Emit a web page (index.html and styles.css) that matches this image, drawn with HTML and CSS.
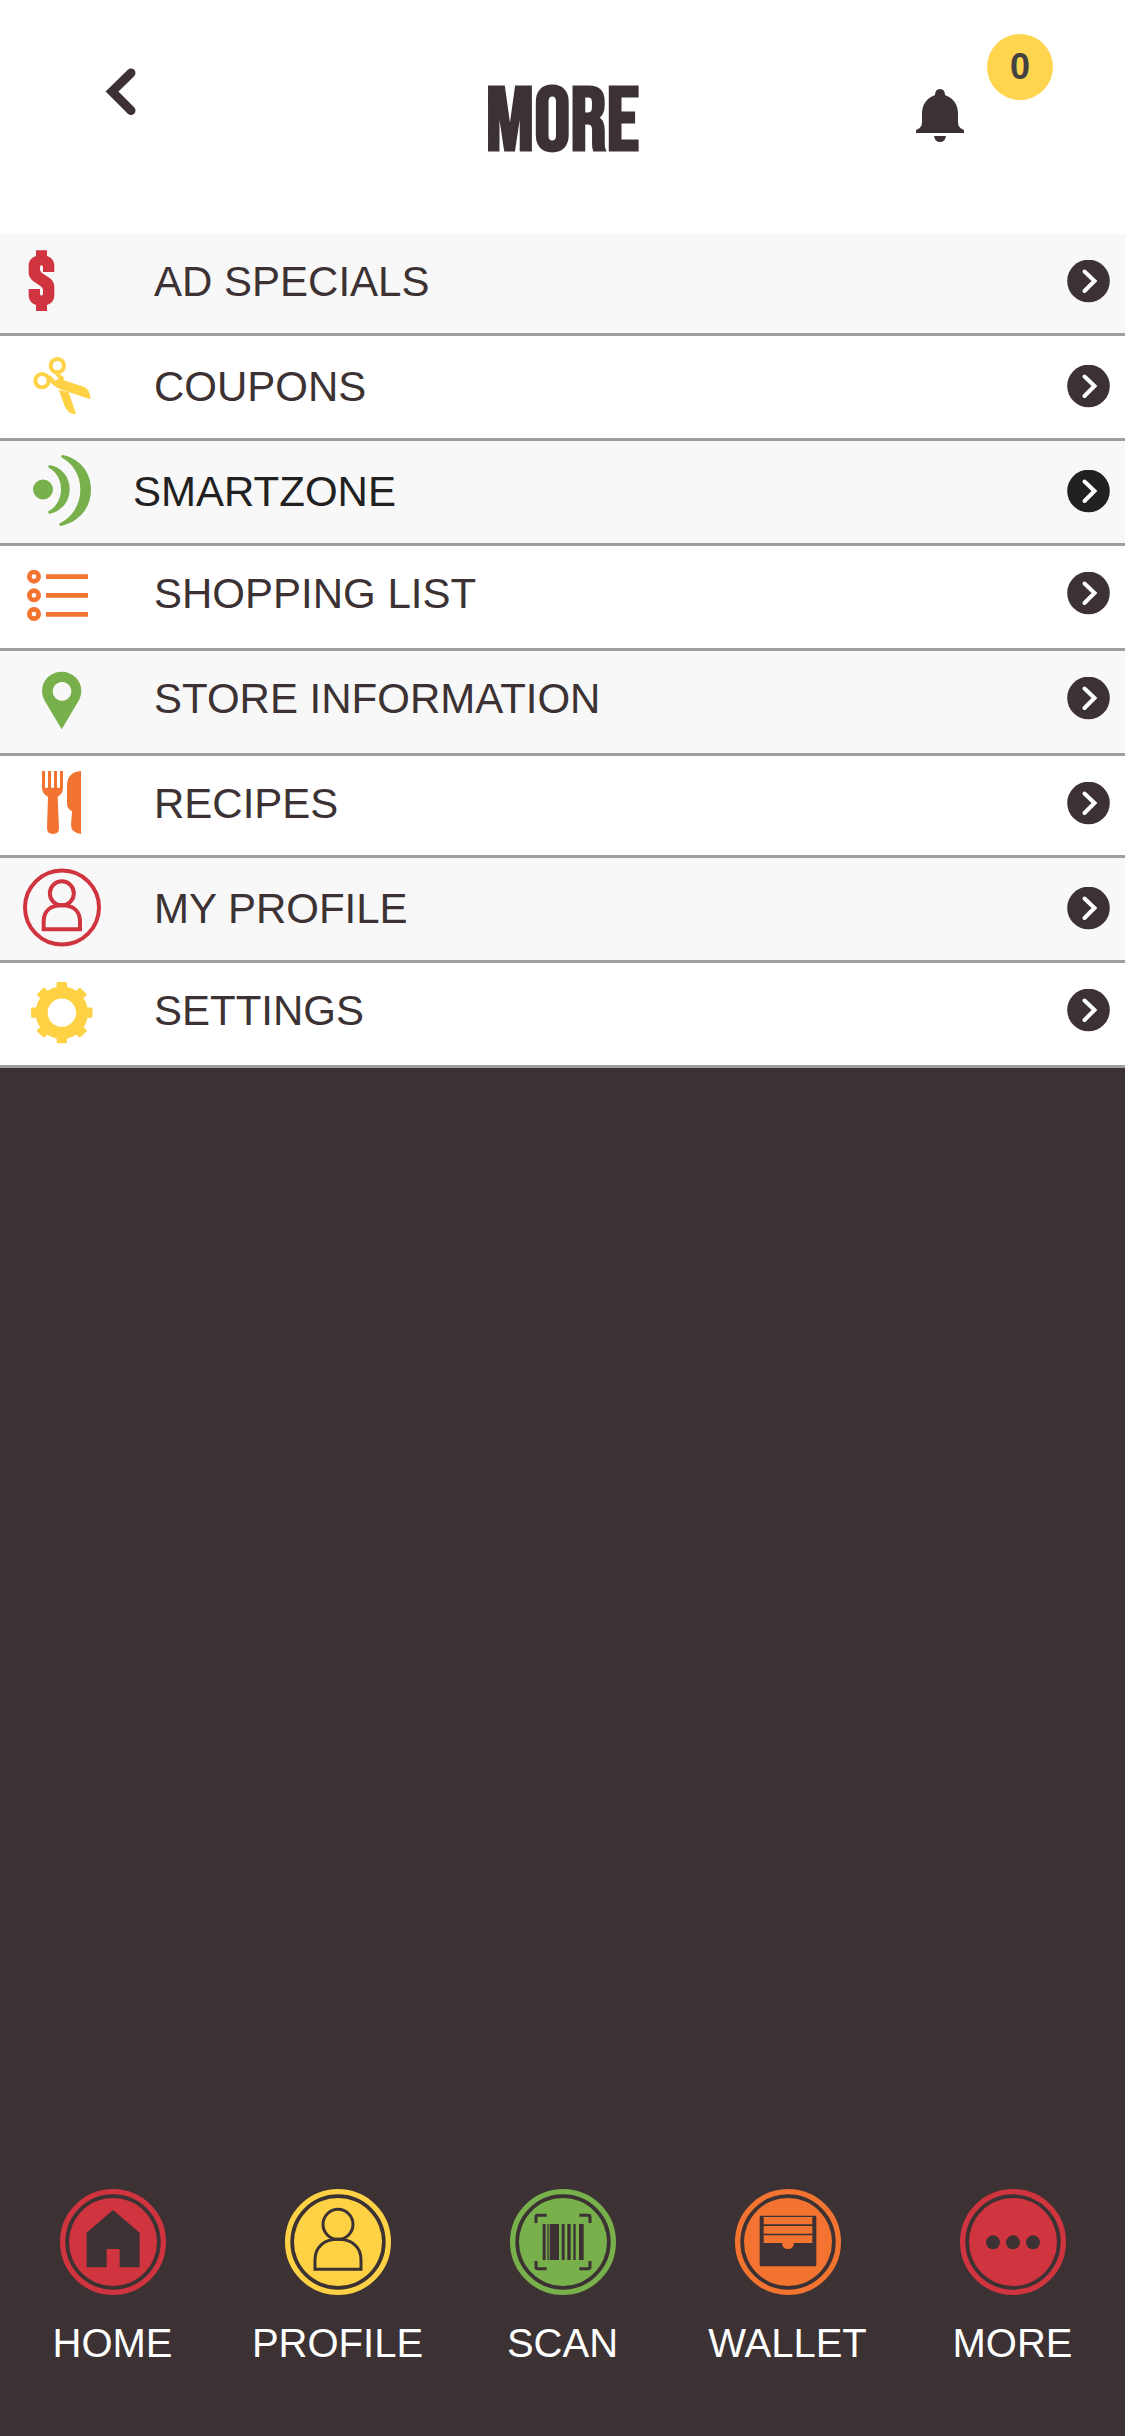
FILE: index.html
```html
<!DOCTYPE html>
<html lang="en">
<head>
    <meta charset="UTF-8">
    <meta name="viewport" content="width=device-width, initial-scale=1.0">
    <title>More</title>
    <link rel="stylesheet" href="styles.css">
</head>
<body>
    <header class="header">
        <button class="back" type="button" aria-label="Back">
            <svg width="31" height="48" viewBox="0 0 31 48"><path d="M26 5L7 23.500L26 42.500" fill="none" stroke="currentColor" stroke-width="9" stroke-linecap="round"/></svg>
        </button>
        <h1 class="title">MORE</h1>
        <button class="bell" type="button" aria-label="Notifications">
            <svg width="50" height="54" viewBox="0 0 50 54" fill="currentColor">
                <path d="M20 6Q20 0 25 0Q30 0 30 6Q43 11 43 25V33Q43 39 49 41V44H1V41Q7 39 7 33V25Q7 11 20 6Z"/>
                <path d="M19 47H31Q30 53 25 53Q20 53 19 47Z"/>
            </svg>
            <span class="badge">0</span>
        </button>
    </header>

    <!-- menu list -->
    <ul class="menu">
        <li>
            <a href="#" class="row short">
                <svg class="icon red" viewBox="0 21 372 270"><path d="M108 61H141V78C155 83 163 92 163 108V126H129V112Q129 106 124 106Q120 106 120 112V119Q121 126 129 131L150 145Q163 155 163 172V195C163 211 155 220 141 225V243H108V225C94 220 86 211 86 195V177H120V190Q120 197 124 197Q129 197 129 190V179Q128 172 120 167L98 152Q86 142 86 127V108C86 92 94 83 108 78Z"/></svg>
                <span class="label">AD SPECIALS</span>
                <svg class="go" viewBox="0 0 43 44"><circle cx="21.500" cy="21" r="21.300"/><path d="M17.500 11.500L27.500 21L17.500 31"/></svg>
            </a>
        </li>
        <li>
            <a href="#" class="row">
                <svg class="icon yellow" viewBox="0 336 372 270">
                    <circle cx="172" cy="407" r="20" fill="none" stroke="currentColor" stroke-width="12"/>
                    <circle cx="126" cy="452" r="20" fill="none" stroke="currentColor" stroke-width="12"/>
                    <path d="M158 424L172 428L190 440L192 451L255 472Q272 484 271 508L186 479Q168 474 150 456L144 438L151 436L166 452L176 446Z"/>
                    <path d="M176 479L206 487L228 551Q205 556 193 526Z"/>
                </svg>
                <span class="label">COUPONS</span>
                <svg class="go" viewBox="0 0 43 44"><circle cx="21.500" cy="21" r="21.300"/><path d="M17.500 11.500L27.500 21L17.500 31"/></svg>
            </a>
        </li>
        <li>
            <a href="#" class="row zone">
                <svg class="icon green" viewBox="0 51 372 270">
                    <circle cx="129" cy="178.500" r="30"/>
                    <path d="M149 105C186 112 209 141 209 178C209 214 187 242 150 251Q143 251 145 244C168 232 183 208 183 178C183 149 170 126 146 113Q143 107 149 105Z"/>
                    <path d="M188 75C240 86 273 127 273 179C273 232 239 275 183 288Q175 286 179 280C216 262 241 224 241 179C241 137 221 103 184 82Q182 76 188 75Z"/>
                </svg>
                <span class="label">SMARTZONE</span>
                <svg class="go" viewBox="0 0 43 44"><circle cx="21.500" cy="21" r="21.300"/><path d="M17.500 11.500L27.500 21L17.500 31"/></svg>
            </a>
        </li>
        <li>
            <a href="#" class="row raised">
                <svg class="icon orange" viewBox="0 357 372 270">
                    <g fill="none" stroke="currentColor" stroke-width="14">
                        <circle cx="102" cy="440" r="14"/>
                        <circle cx="102" cy="496" r="14"/>
                        <circle cx="102" cy="552" r="14"/>
                        <path d="M138 440H264M138 496H264M138 553H264"/>
                    </g>
                </svg>
                <span class="label">SHOPPING LIST</span>
                <svg class="go" viewBox="0 0 43 44"><circle cx="21.500" cy="21" r="21.300"/><path d="M17.500 11.500L27.500 21L17.500 31"/></svg>
            </a>
        </li>
        <li>
            <a href="#" class="row raised">
                <svg class="icon green" viewBox="0 42 372 270"><path fill-rule="evenodd" d="M185 268L138 189Q126 170 126 153A59 58 0 0 1 244 153Q244 170 232 189ZM186 126a28 28 0 1 0 .1 0Z"/></svg>
                <span class="label">STORE INFORMATION</span>
                <svg class="go" viewBox="0 0 43 44"><circle cx="21.500" cy="21" r="21.300"/><path d="M17.500 11.500L27.500 21L17.500 31"/></svg>
            </a>
        </li>
        <li>
            <a href="#" class="row short">
                <svg class="icon orange" viewBox="0 357 372 270">
                    <path d="M126 393H135V443H144V393H153V443H162V393H171V443H180V393H189V444Q188 463 173 470L177 565Q177 582 159 582Q141 582 141 565L144 470Q127 463 126 444Z"/>
                    <path d="M243 393V582Q214 578 213 556L216 514Q201 505 201 492V435Q202 397 243 393Z"/>
                </svg>
                <span class="label">RECIPES</span>
                <svg class="go" viewBox="0 0 43 44"><circle cx="21.500" cy="21" r="21.300"/><path d="M17.500 11.500L27.500 21L17.500 31"/></svg>
            </a>
        </li>
        <li>
            <a href="#" class="row">
                <svg class="icon red" viewBox="0 42 372 270">
                    <g fill="none" stroke="currentColor" stroke-width="12">
                        <circle cx="186" cy="172.500" r="111"/>
                        <circle cx="185.500" cy="130" r="36"/>
                        <path d="M131 238V215C131 183 152 166 185.500 166C219 166 240 183 240 215V238Z"/>
                    </g>
                </svg>
                <span class="label">MY PROFILE</span>
                <svg class="go" viewBox="0 0 43 44"><circle cx="21.500" cy="21" r="21.300"/><path d="M17.500 11.500L27.500 21L17.500 31"/></svg>
            </a>
        </li>
        <li>
            <a href="#" class="row raised">
                <svg class="icon yellow" viewBox="0 348 372 270">
                    <circle cx="185.500" cy="488" r="60.500" fill="none" stroke="currentColor" stroke-width="36"/>
                    <g>
                        <rect x="170" y="396" width="31" height="24" rx="4"/>
                        <rect x="170" y="396" width="31" height="24" rx="4" transform="rotate(45 185.500 488)"/>
                        <rect x="170" y="396" width="31" height="24" rx="4" transform="rotate(90 185.500 488)"/>
                        <rect x="170" y="396" width="31" height="24" rx="4" transform="rotate(135 185.500 488)"/>
                        <rect x="170" y="396" width="31" height="24" rx="4" transform="rotate(180 185.500 488)"/>
                        <rect x="170" y="396" width="31" height="24" rx="4" transform="rotate(225 185.500 488)"/>
                        <rect x="170" y="396" width="31" height="24" rx="4" transform="rotate(270 185.500 488)"/>
                        <rect x="170" y="396" width="31" height="24" rx="4" transform="rotate(315 185.500 488)"/>
                    </g>
                </svg>
                <span class="label">SETTINGS</span>
                <svg class="go" viewBox="0 0 43 44"><circle cx="21.500" cy="21" r="21.300"/><path d="M17.500 11.500L27.500 21L17.500 31"/></svg>
            </a>
        </li>
    </ul>

    <!-- bottom tabs -->
    <nav class="tabs">
        <a href="#" class="tab">
            <svg class="disc red" viewBox="0 0 318 318">
                <circle class="ring" cx="159" cy="159" r="151"/>
                <circle cx="159" cy="159" r="132"/>
                <path class="dark" d="M159 63L239 131V235H179V180H140V235H80V131Z"/>
            </svg>
            <span>HOME</span>
        </a>
        <a href="#" class="tab">
            <svg class="disc yellow" viewBox="0 0 318 318">
                <circle class="ring" cx="159" cy="159" r="151"/>
                <circle cx="159" cy="159" r="132"/>
                <g class="line">
                    <circle cx="159" cy="106" r="45"/>
                    <path d="M90 241V213C90 174 116 151 159 151C202 151 228 174 228 213V241Z"/>
                </g>
            </svg>
            <span>PROFILE</span>
        </a>
        <a href="#" class="tab">
            <svg class="disc green" viewBox="0 0 318 318">
                <circle class="ring" cx="159" cy="159" r="151"/>
                <circle cx="159" cy="159" r="132"/>
                <path class="dark" d="M98 105h9v108h-9zM112 105h4v108h-4zM119 105h28v108h-28zM155 105h9v108h-9zM172 105h10v108h-10zM190 105h7v108h-7zM207 105h14v108h-14z"/>
                <path class="line" d="M110 79H83Q78 79 78 84V102M208 79H235Q240 79 240 84V102M110 239H83Q78 239 78 234V216M208 239H235Q240 239 240 234V216"/>
            </svg>
            <span>SCAN</span>
        </a>
        <a href="#" class="tab">
            <svg class="disc orange" viewBox="0 0 318 318">
                <circle class="ring" cx="159" cy="159" r="151"/>
                <circle cx="159" cy="159" r="132"/>
                <rect class="dark" x="74" y="80" width="170" height="152" rx="4"/>
                <path d="M86 84H232V106H86ZM86 111H232V134H86ZM86 139H232V162H177Q176 180 159 180Q142 180 141 162H86Z"/>
            </svg>
            <span>WALLET</span>
        </a>
        <a href="#" class="tab">
            <svg class="disc red" viewBox="0 0 318 318">
                <circle class="ring" cx="159" cy="159" r="151"/>
                <circle cx="159" cy="159" r="132"/>
                <g class="dark">
                    <circle cx="99" cy="160" r="21"/>
                    <circle cx="159" cy="160" r="21"/>
                    <circle cx="219" cy="160" r="21"/>
                </g>
            </svg>
            <span>MORE</span>
        </a>
    </nav>
</body>
</html>
```
FILE: styles.css
```css
*{
    box-sizing: border-box;
}
body{
    margin: 0;
    min-height: 100vh;
    display: flex;
    flex-direction: column;
    background-color: #3c3233;
    color: #3c3233;
    font-family: "Liberation Sans", Arial, sans-serif;
    font-size: 42px;
    line-height: 48px;
}
a{
    color: inherit;
    text-decoration: none;
}
button{
    border: 0;
    padding: 0;
    background: none;
    color: inherit;
    font: inherit;
}
svg{
    display: block;
    flex: none;
}

.header{
    display: grid;
    grid-template-columns: 1fr 1fr 1fr;
    align-items: center;
    justify-items: center;
    height: 234px;
    background-color: #fff;
}
.back{
    align-self: start;
    justify-self: start;
    padding: 68px 0 0 105px;
}
.title{
    margin: 0;
    padding-top: 12px;
    font-family: "Bebas Neue", "Roboto Condensed", "Open Sans Condensed", "Liberation Sans Narrow", "DejaVu Sans Condensed", sans-serif;
    font-size: 90px;
    line-height: 96px;
    font-weight: 700;
}
.bell{
    position: relative;
    padding: 0 0 3px 5px;
}
.badge{
    position: absolute;
    left: 77px;
    bottom: 46px;
    width: 66px;
    border-radius: 50%;
    background-color: #ffd54f;
    color: #424242;
    font-size: 36px;
    line-height: 66px;
    font-weight: 700;
    text-align: center;
}

.menu{
    margin: 0;
    padding: 0;
    list-style: none;
}
.menu li{
    border-bottom: 3px solid #9e9e9e;
    background-color: #fff;
}
.menu li:nth-child(odd){
    background-color: #f8f8f8;
}
.row{
    display: flex;
    align-items: center;
    min-height: 102px;
    padding-right: 15px;
}
.short{
    min-height: 99px;
    padding-bottom: 3px;
}
.raised{
    padding-bottom: 6px;
}
.icon{
    width: 124px;
    height: 90px;
    fill: currentColor;
}
.label{
    flex: 1;
    padding-left: 30px;
}
.zone{
    color: #212121;
}
.zone .label{
    padding-left: 9px;
}
.go{
    width: 43px;
    height: 44px;
    fill: currentColor;
}
.go path{
    fill: none;
    stroke: #fff;
    stroke-width: 4;
    stroke-linecap: round;
}

.red{
    color: #cf343f;
}
.yellow{
    color: #ffd246;
}
.green{
    color: #78b04c;
}
.orange{
    color: #f37330;
}

.tabs{
    display: grid;
    grid-template-columns: repeat(5, 1fr);
    margin-top: auto;
    padding-bottom: 69px;
    color: #fff;
    font-size: 40px;
}
.tab{
    display: flex;
    flex-direction: column;
    align-items: center;
    gap: 24px;
}
.disc{
    width: 106px;
    height: 106px;
    fill: currentColor;
}
.ring{
    fill: none;
    stroke: currentColor;
    stroke-width: 16;
}
.dark{
    fill: #3c3233;
}
.line{
    fill: none;
    stroke: #3c3233;
    stroke-width: 9;
}
```
